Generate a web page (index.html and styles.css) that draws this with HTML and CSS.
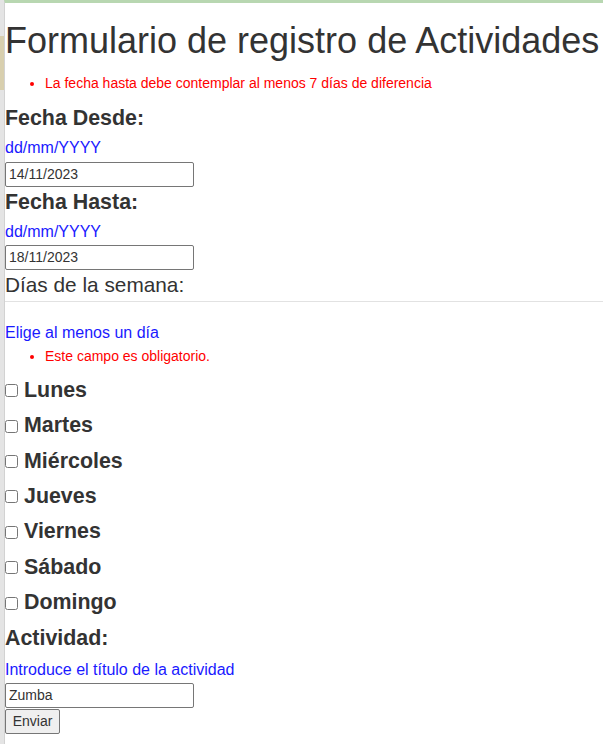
FILE: index.html
```html
<!DOCTYPE html>
<html lang="es">
<head>
<meta charset="utf-8">
<title>Formulario de registro de Actividades</title>
<link rel="stylesheet" href="styles.css">
</head>
<body>
<div class="page">
  <h1 class="title">Formulario de registro de Actividades</h1>
  <ul class="errors errors-top"><li>La fecha hasta debe contemplar al menos 7 días de diferencia</li></ul>
  <form class="form">
    <label class="field-label label-first" for="desde">Fecha Desde:</label>
    <p class="hint hint-date">dd/mm/YYYY</p>
    <input class="text-input" id="desde" type="text" value="14/11/2023">

    <label class="field-label label-next" for="hasta">Fecha Hasta:</label>
    <p class="hint hint-date">dd/mm/YYYY</p>
    <input class="text-input" id="hasta" type="text" value="18/11/2023">

    <div class="section-title">Días de la semana:</div>
    <hr class="divider">
    <p class="hint hint-days">Elige al menos un día</p>
    <ul class="errors errors-days"><li>Este campo es obligatorio.</li></ul>

    <div class="days">
      <div class="day"><input class="check" type="checkbox" id="d1"><label class="day-label" for="d1">Lunes</label></div>
      <div class="day"><input class="check" type="checkbox" id="d2"><label class="day-label" for="d2">Martes</label></div>
      <div class="day"><input class="check" type="checkbox" id="d3"><label class="day-label" for="d3">Miércoles</label></div>
      <div class="day"><input class="check" type="checkbox" id="d4"><label class="day-label" for="d4">Jueves</label></div>
      <div class="day"><input class="check" type="checkbox" id="d5"><label class="day-label" for="d5">Viernes</label></div>
      <div class="day"><input class="check" type="checkbox" id="d6"><label class="day-label" for="d6">Sábado</label></div>
      <div class="day"><input class="check" type="checkbox" id="d7"><label class="day-label" for="d7">Domingo</label></div>
    </div>

    <label class="field-label label-activity" for="act">Actividad:</label>
    <p class="hint hint-activity">Introduce el título de la actividad</p>
    <input class="text-input input-activity" id="act" type="text" value="Zumba">
    <button class="submit" type="submit">Enviar</button>
  </form>
</div>
</body>
</html>
```

FILE: styles.css
```css
html, body {
  margin: 0;
  padding: 0;
}

body {
  font-family: "Liberation Sans", Arial, sans-serif;
  color: #333;
  background-color: #e4e4e4;
  background-image:
    linear-gradient(#d8cfae, #d8cfae);
  background-repeat: no-repeat;
  background-size: 4px 54px;
  background-position: 0 36px;
  min-height: 744px;
}

.page {
  margin-left: 4px;
  border-top: 3px solid #b8d7b1;
  border-left: 1px solid #d2d2d2;
  background: #fff;
  min-height: 741px;
  overflow: hidden;
}

.title {
  font-size: 36px;
  font-weight: normal;
  line-height: 41.4px;
  margin: 17px 0 0 0;
  color: #333;
  white-space: nowrap;
}

.errors {
  color: #f00;
  font-size: 14px;
  line-height: 16.1px;
  padding-left: 40px;
  margin: 0;
}

.errors-top { margin-top: 13.6px; }
.errors-days { margin-top: 5.8px; }

.form {
  display: block;
}

.field-label {
  display: block;
  font-size: 21.4px;
  font-weight: bold;
  line-height: 23.9px;
}

.label-first { margin-top: 16px; }
.label-next { margin-top: 4px; }
.label-activity { margin-top: 11.5px; }

.hint {
  color: #1a1aff;
  font-size: 16px;
  line-height: 18.4px;
  margin: 0;
}

.hint-date { margin-top: 8.3px; }
.hint-days { margin-top: 21.9px; }
.hint-activity { margin-top: 10.1px; }

.text-input {
  display: block;
  box-sizing: border-box;
  width: 189px;
  height: 25px;
  margin: 3.8px 0 0 0;
  padding: 0 3px;
  border: 1px solid #767676;
  border-radius: 2px;
  font-family: "Liberation Sans", Arial, sans-serif;
  font-size: 14px;
  color: #333;
  background: #fff;
}

.input-activity { margin-top: 3.6px; }

.section-title {
  font-size: 20.8px;
  line-height: 23.9px;
  margin-top: 3.2px;
}

.divider {
  border: 0;
  border-top: 1px solid #e2e2e2;
  height: 0;
  margin: 3.7px 0 0 0;
}

.days {
  display: flex;
  flex-direction: column;
  gap: 11.5px;
  margin-top: 15px;
}

.day {
  display: flex;
  align-items: baseline;
  height: 23.9px;
}

.check {
  width: 13px;
  height: 13px;
  margin: 0 6px 0 0;
  align-self: flex-end;
  position: relative;
  top: -5.5px;
}

.day-label {
  font-size: 21.4px;
  font-weight: bold;
  line-height: 23.9px;
}

.submit {
  display: block;
  box-sizing: border-box;
  margin-top: 1px;
  height: 25px;
  width: 55px;
  padding: 0;
  font-family: "Liberation Sans", Arial, sans-serif;
  font-size: 14px;
  color: #333;
  background: #efefef;
  border: 1px solid #767676;
  border-radius: 2px;
}
```
